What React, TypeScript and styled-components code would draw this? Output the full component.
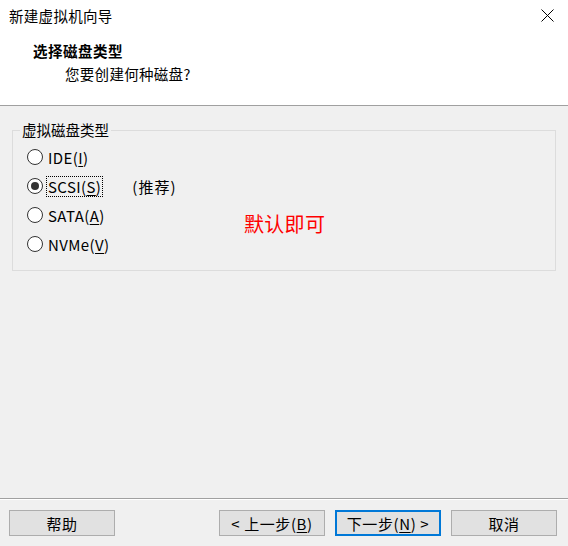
import React from "react";
import styled, { createGlobalStyle } from "styled-components";

const Global = createGlobalStyle`
  html, body { margin: 0; padding: 0; background: #f0f0f0; }
  body { font-family: "Noto Sans CJK SC", "Noto Sans", sans-serif; }
`;

const Window = styled.div`
  width: 568px;
  height: 546px;
  display: flex;
  flex-direction: column;
  background: #f0f0f0;
  color: #000;
  font-size: 14px;
  overflow: hidden;
`;

const Header = styled.div`
  background: #fff;
  height: 105px;
  display: flex;
  flex-direction: column;
  border-bottom: 1px solid #a0a0a0;
`;

const TitleBar = styled.div`
  height: 30px;
  display: flex;
  align-items: center;
  justify-content: space-between;
  padding: 0 14px 0 9px;
`;

const TitleText = styled.span`
  font-size: 14.5px;
  letter-spacing: 0.3px;
`;

const Heading = styled.div`
  padding: 10px 0 0 33px;
  font-size: 14.5px;
  font-weight: bold;
  line-height: 22px;
  letter-spacing: 0.5px;
`;

const SubHeading = styled.div`
  padding: 1px 0 0 65px;
  font-size: 14.5px;
  line-height: 22px;
  letter-spacing: 0.3px;
`;

const Body = styled.div`
  flex: 1;
  padding: 15px 12px 0 12px;
`;

const Group = styled.fieldset`
  position: relative;
  margin: 0;
  height: 150px;
  box-sizing: border-box;
  border: 1px solid #dcdcdc;
  padding: 7px 0 0 14px;
`;

const Legend = styled.legend`
  padding: 0 2px;
  margin-left: -7px;
  font-size: 14.5px;
  line-height: 18px;
`;

const Options = styled.div`
  display: flex;
  flex-direction: column;
  gap: 7px;
`;

const Row = styled.label`
  display: flex;
  align-items: center;
  height: 22px;
  font-size: 15px;
  letter-spacing: 0.4px;
`;

const Radio = styled.span<{ $checked?: boolean }>`
  width: 14px;
  height: 14px;
  border-radius: 50%;
  border: 1px solid #333;
  background: #fff;
  display: flex;
  align-items: center;
  justify-content: center;
  margin-right: 5px;
  flex-shrink: 0;
  &::after {
    content: "";
    display: ${(p) => (p.$checked ? "block" : "none")};
    width: 8px;
    height: 8px;
    border-radius: 50%;
    background: #333;
  }
`;

const Caption = styled.span<{ $focus?: boolean }>`
  padding: 0 1px;
  border: 1px ${(p) => (p.$focus ? "dotted #000" : "solid transparent")};
  line-height: 19px;
  margin-left: -2px;
`;

const Key = styled.span`
  text-decoration: underline;
  text-underline-offset: 2px;
`;

const Note = styled.span`
  margin-left: 29px;
  letter-spacing: 1px;
`;

const Annotation = styled.span`
  position: absolute;
  left: 231px;
  top: 70px;
  color: #ff0000;
  font-size: 20px;
  letter-spacing: 0.3px;
`;

const Footer = styled.div`
  border-top: 1px solid #a0a0a0;
  box-shadow: inset 0 1px 0 #ffffff;
  height: 48px;
  box-sizing: border-box;
  padding: 11px 11px 0 9px;
  display: flex;
  align-items: flex-start;
`;

const Button = styled.button<{ $primary?: boolean }>`
  width: 106px;
  height: 26px;
  box-sizing: border-box;
  background: #e1e1e1;
  border: ${(p) => (p.$primary ? "2px solid #0078d7" : "1px solid #adadad")};
  font-family: inherit;
  font-size: 15px;
  letter-spacing: 0.6px;
  color: #000;
  padding: 0;
  display: flex;
  align-items: center;
  justify-content: center;
`;

const Spacer = styled.div`
  flex: 1;
`;

const ButtonGroup = styled.div`
  display: flex;
  gap: 10px;
`;

const CloseIcon = () => (
  <svg width="13" height="13" viewBox="0 0 13 13">
    <path d="M0.5 0.5 L12.5 12.5 M12.5 0.5 L0.5 12.5" stroke="#000" strokeWidth="1" fill="none" />
  </svg>
);

export default function App() {
  return (
    <>
      <Global />
      <Window>
        <Header>
          <TitleBar>
            <TitleText>新建虚拟机向导</TitleText>
            <CloseIcon />
          </TitleBar>
          <Heading>选择磁盘类型</Heading>
          <SubHeading>您要创建何种磁盘?</SubHeading>
        </Header>
        <Body>
          <Group>
            <Legend>虚拟磁盘类型</Legend>
            <Options>
              <Row>
                <Radio />
                <Caption>IDE(<Key>I</Key>)</Caption>
              </Row>
              <Row>
                <Radio $checked />
                <Caption $focus>SCSI(<Key>S</Key>)</Caption>
                <Note>(推荐)</Note>
              </Row>
              <Row>
                <Radio />
                <Caption>SATA(<Key>A</Key>)</Caption>
              </Row>
              <Row>
                <Radio />
                <Caption>NVMe(<Key>V</Key>)</Caption>
              </Row>
            </Options>
            <Annotation>默认即可</Annotation>
          </Group>
        </Body>
        <Footer>
          <Button>帮助</Button>
          <Spacer />
          <ButtonGroup>
            <Button>&lt; 上一步(<Key>B</Key>)</Button>
            <Button $primary>下一步(<Key>N</Key>) &gt;</Button>
            <Button>取消</Button>
          </ButtonGroup>
        </Footer>
      </Window>
    </>
  );
}
